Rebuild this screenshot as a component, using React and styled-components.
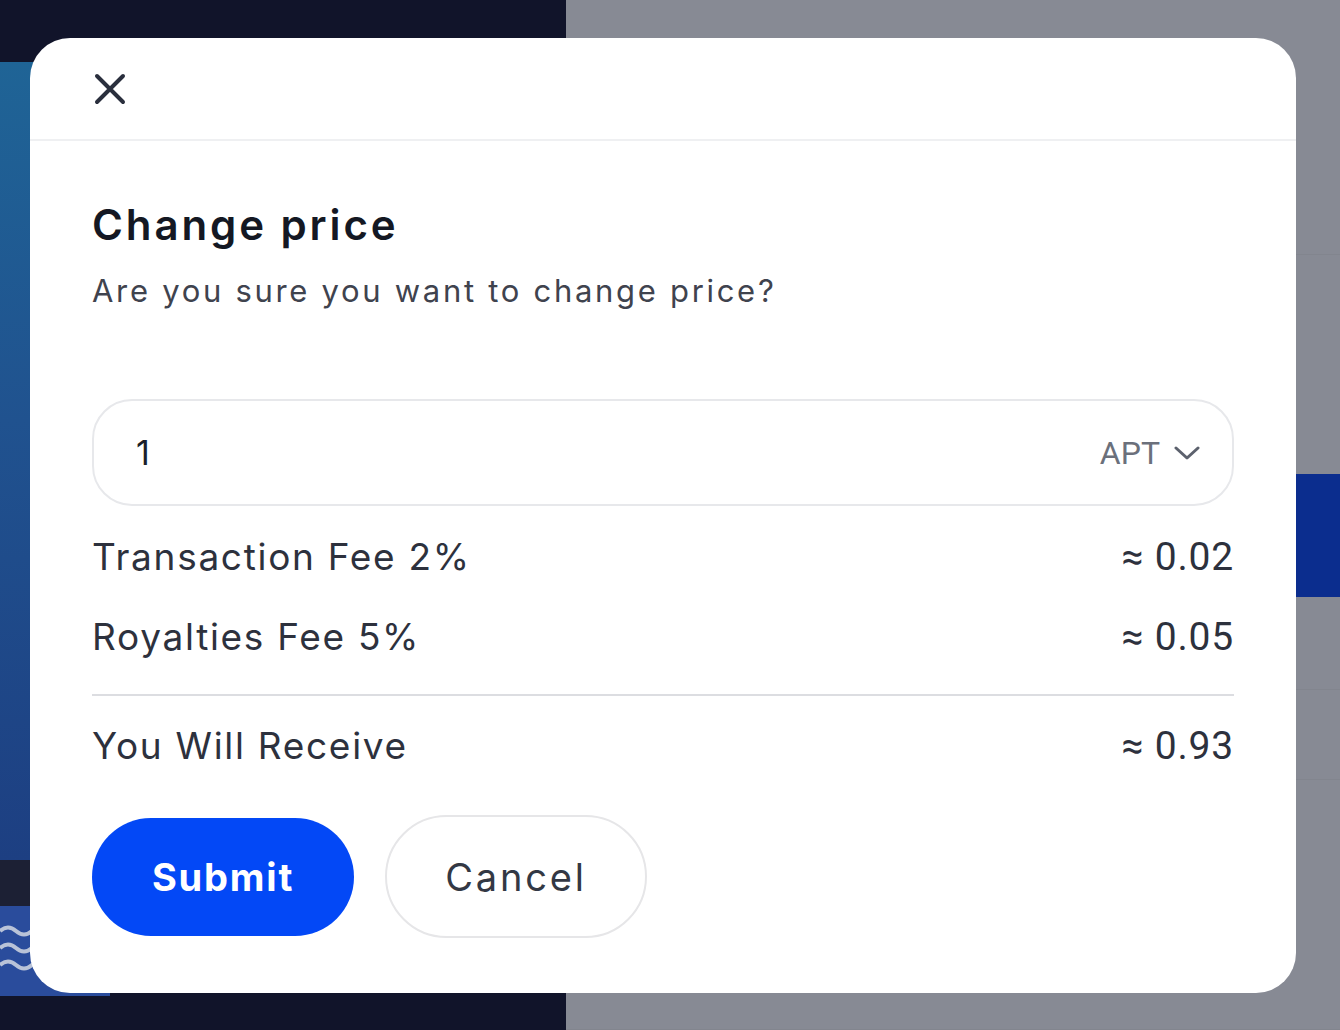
import React from "react";
import styled, { createGlobalStyle } from "styled-components";

const Global = createGlobalStyle`
  html, body { margin: 0; padding: 0; }
  body { width: 1340px; height: 1030px; overflow: hidden; font-family: "Inter", "Noto Sans", sans-serif; }
  * { box-sizing: border-box; }
`;

const Page = styled.div`
  position: relative;
  display: grid;
  grid-template-columns: 566px 1fr;
  width: 1340px;
  height: 1030px;
`;

const LeftPane = styled.div`
  background: #11142a;
  display: flex;
  flex-direction: column;
  padding-top: 62px;
`;

const HeroCard = styled.div`
  height: 798px;
  background: linear-gradient(180deg, #1f6496 0%, #20528f 45%, #1d3f82 100%);
  border-radius: 0 30px 0 0;
`;

const DarkBand = styled.div`
  height: 46px;
  background: #1c2034;
`;

const WaveBlock = styled.div`
  height: 90px;
  width: 110px;
  background: #2a4c9c;
  display: flex;
  align-items: center;
`;

const RightPane = styled.div`
  background: #878a94;
  display: flex;
  flex-direction: column;
`;

const Band = styled.div`
  height: ${(p) => p.$h}px;
  border-bottom: 1px solid rgba(0, 0, 0, 0.035);
  display: flex;
  justify-content: flex-end;
`;

const BlueTab = styled.div`
  width: 44px;
  height: 123px;
  background: #0b2d8e;
  margin-top: ${(p) => p.$top}px;
`;

const Modal = styled.div`
  position: absolute;
  left: 30px;
  top: 38px;
  width: 1266px;
  height: 955px;
  background: #ffffff;
  border-radius: 40px;
  display: flex;
  flex-direction: column;
  overflow: hidden;
`;

const Header = styled.div`
  height: 103px;
  border-bottom: 2px solid #eff0f2;
  display: flex;
  align-items: center;
  padding: 0 0 0 61px;
`;

const CloseButton = styled.button`
  border: none;
  background: none;
  padding: 0;
  width: 38px;
  height: 38px;
  display: flex;
  align-items: center;
  justify-content: center;
  cursor: pointer;
`;

const Body = styled.div`
  padding: 56px 62px 52px 62px;
  display: flex;
  flex-direction: column;
  flex: 1;
`;

const Title = styled.h2`
  margin: 0;
  font-family: "Inter", "Noto Sans", sans-serif;
  font-weight: 600;
  font-size: 42px;
  line-height: 55px;
  color: #141823;
  letter-spacing: 2.9px;
`;

const Subtitle = styled.p`
  margin: 18px 0 0 0;
  font-family: "Inter", "Noto Sans", sans-serif;
  font-size: 31px;
  line-height: 42px;
  color: #3f434e;
  letter-spacing: 2.7px;
`;

const InputBox = styled.div`
  margin-top: 87px;
  height: 107px;
  border: 2px solid #e7e8eb;
  border-radius: 40px;
  display: flex;
  align-items: center;
  padding: 0 32px 0 42px;
`;

const AmountInput = styled.input`
  flex: 1;
  border: none;
  outline: none;
  background: transparent;
  font-family: "Inter", "Noto Sans", sans-serif;
  font-size: 34px;
  color: #1b1f2a;
  padding: 0;
`;

const CurrencySelect = styled.div`
  display: flex;
  align-items: center;
  gap: 14px;
  font-family: "Roboto", "Inter", sans-serif;
  font-size: 32px;
  color: #6b707b;
`;

const FeeRow = styled.div`
  display: flex;
  justify-content: space-between;
  align-items: center;
  margin-top: ${(p) => p.$mt}px;
  height: 49px;
`;

const FeeLabel = styled.span`
  font-family: "Inter", "Noto Sans", sans-serif;
  font-size: 37px;
  color: #2d313d;
  letter-spacing: 1.7px;
`;

const FeeValue = styled.span`
  font-family: "Roboto", "Inter", sans-serif;
  font-size: 39px;
  color: #2d313d;
  letter-spacing: 0.8px;
`;

const Divider = styled.hr`
  margin: 33px 0 0 0;
  border: none;
  height: 2px;
  background: #dcdde1;
`;

const Actions = styled.div`
  margin-top: 45px;
  display: flex;
  align-items: center;
  gap: 31px;
`;

const Button = styled.button`
  width: 262px;
  height: ${(p) => (p.$primary ? 118 : 123)}px;
  border-radius: 62px;
  border: ${(p) => (p.$primary ? "none" : "2px solid #e6e6e8")};
  background: ${(p) => (p.$primary ? "#0348f6" : "#ffffff")};
  color: ${(p) => (p.$primary ? "#ffffff" : "#333844")};
  font-family: "Inter", "Noto Sans", sans-serif;
  font-size: 38px;
  font-weight: ${(p) => (p.$primary ? 700 : 400)};
  letter-spacing: ${(p) => (p.$primary ? 1.8 : 2.8)}px;
  cursor: pointer;
`;

const rows = [
  { label: "Transaction Fee 2%", value: "≈ 0.02", mt: 26 },
  { label: "Royalties Fee 5%", value: "≈ 0.05", mt: 31 },
];

export default function App() {
  return (
    <>
      <Global />
      <Page>
        <LeftPane>
          <HeroCard />
          <DarkBand />
          <WaveBlock>
            <svg width="40" height="70" viewBox="0 0 40 70">
              {[15, 32, 49].map((y) => (
                <path
                  key={y}
                  d={`M0 ${y} q8 -7 16 0 t16 0 t16 0`}
                  stroke="#b9c3d8"
                  strokeWidth="4"
                  fill="none"
                />
              ))}
            </svg>
          </WaveBlock>
        </LeftPane>
        <RightPane>
          <Band $h={255} />
          <Band $h={435}>
            <BlueTab $top={219} />
          </Band>
          <Band $h={90} />
          <Band $h={250} />
        </RightPane>
        <Modal>
          <Header>
            <CloseButton aria-label="Close">
              <svg width="34" height="34" viewBox="0 0 34 34">
                <path
                  d="M4 4 L30 30 M30 4 L4 30"
                  stroke="#2a2f3d"
                  strokeWidth="4"
                  strokeLinecap="round"
                />
              </svg>
            </CloseButton>
          </Header>
          <Body>
            <Title>Change price</Title>
            <Subtitle>Are you sure you want to change price?</Subtitle>
            <InputBox>
              <AmountInput defaultValue="1" />
              <CurrencySelect>
                APT
                <svg width="26" height="16" viewBox="0 0 26 16">
                  <path
                    d="M2 3 L13 13 L24 3"
                    stroke="#5c616d"
                    strokeWidth="3"
                    fill="none"
                    strokeLinecap="round"
                    strokeLinejoin="round"
                  />
                </svg>
              </CurrencySelect>
            </InputBox>
            {rows.map((r) => (
              <FeeRow key={r.label} $mt={r.mt}>
                <FeeLabel>{r.label}</FeeLabel>
                <FeeValue>{r.value}</FeeValue>
              </FeeRow>
            ))}
            <Divider />
            <FeeRow $mt={25}>
              <FeeLabel>You Will Receive</FeeLabel>
              <FeeValue>≈ 0.93</FeeValue>
            </FeeRow>
            <Actions>
              <Button $primary>Submit</Button>
              <Button>Cancel</Button>
            </Actions>
          </Body>
        </Modal>
      </Page>
    </>
  );
}
